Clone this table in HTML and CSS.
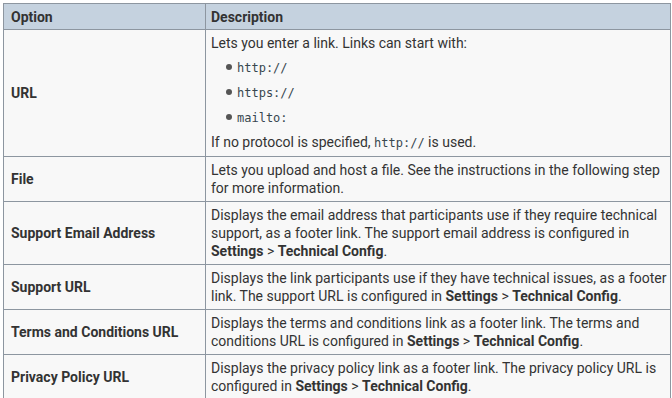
FILE: index.html
```html
<!DOCTYPE html>
<html>
<head>
<meta charset="utf-8">
<link rel="stylesheet" href="styles.css">
</head>
<body>
<table class="opts">
  <colgroup>
    <col class="col1">
    <col class="col2">
  </colgroup>
  <thead>
    <tr><th class="c1">Option</th><th class="c2">Description</th></tr>
  </thead>
  <tbody>
    <tr>
      <td class="c1">URL</td>
      <td class="c2">
        <p>Lets you enter a link. Links can start with:</p>
        <ul class="list">
          <li><code>http://</code></li>
          <li><code>https://</code></li>
          <li><code>mailto:</code></li>
        </ul>
        <p class="after">If no protocol is specified, <code>http://</code> is used.</p>
      </td>
    </tr>
    <tr>
      <td class="c1">File</td>
      <td class="c2">Lets you upload and host a file. See the instructions in the following step for more information.</td>
    </tr>
    <tr>
      <td class="c1">Support Email Address</td>
      <td class="c2">Displays the email address that participants use if they require technical support, as a footer link. The support email address is configured in <b>Settings</b> &gt; <b>Technical Config</b>.</td>
    </tr>
    <tr>
      <td class="c1">Support URL</td>
      <td class="c2">Displays the link participants use if they have technical issues, as a footer link. The support URL is configured in <b>Settings</b> &gt; <b>Technical Config</b>.</td>
    </tr>
    <tr>
      <td class="c1">Terms and Conditions URL</td>
      <td class="c2">Displays the terms and conditions link as a footer link. The terms and conditions URL is configured in <b>Settings</b> &gt; <b>Technical Config</b>.</td>
    </tr>
    <tr>
      <td class="c1">Privacy Policy URL</td>
      <td class="c2">Displays the privacy policy link as a footer link. The privacy policy URL is configured in <b>Settings</b> &gt; <b>Technical Config</b>.</td>
    </tr>
  </tbody>
</table>
</body>
</html>
```
FILE: styles.css
```css
html, body {
  margin: 0;
  padding: 0;
  background: #ffffff;
}
body {
  padding: 3px 0 0 3px;
  font-family: Roboto, "Liberation Sans", Arial, sans-serif;
  font-size: 14px;
  line-height: 18px;
  color: #333333;
}
.opts {
  border-collapse: collapse;
  width: 668px;
  table-layout: fixed;
  background: #f8f8f8;
}
.col1 {
  width: 202px;
}
.opts th, .opts td {
  border: 1px solid #8d96a0;
  text-align: left;
  vertical-align: middle;
}
.opts th {
  background: #c5d2df;
  font-weight: 700;
  height: 26px;
  padding: 0;
  color: #333333;
  box-sizing: border-box;
}
.opts td {
  padding: 4px 0 4px 0;
}
.opts .c1 {
  padding-left: 7px;
}
.opts .c2 {
  padding-left: 5px;
  padding-right: 1px;
}
.opts td.c1 {
  font-weight: 700;
}
.opts p {
  margin: 0;
}
.opts b {
  font-weight: 700;
}
.list {
  margin: 0;
  padding: 0 0 0 26px;
  list-style: none;
}
.list li {
  margin-top: 6px;
  position: relative;
}
.list li::before {
  content: "";
  position: absolute;
  left: -11px;
  top: 6px;
  width: 6px;
  height: 6px;
  border-radius: 50%;
  background: #555555;
}
.after {
  margin-top: 6px !important;
}
code {
  font-family: "DejaVu Sans Mono", "Liberation Mono", monospace;
  font-size: 12px;
  color: #37474f;
}
```
